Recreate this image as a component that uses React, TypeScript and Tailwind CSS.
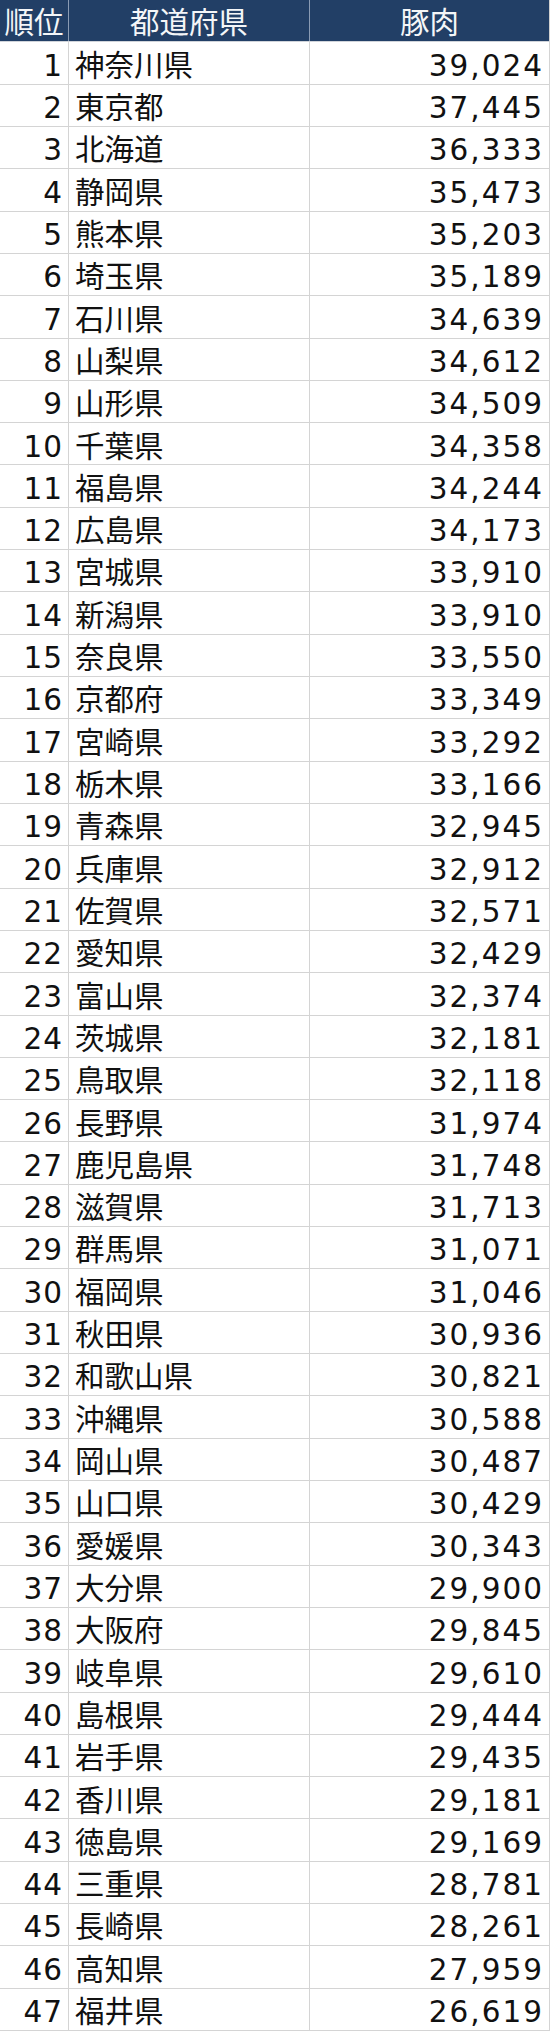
const rows: [string, string][] = [
  ['神奈川県', '39,024'],
  ['東京都', '37,445'],
  ['北海道', '36,333'],
  ['静岡県', '35,473'],
  ['熊本県', '35,203'],
  ['埼玉県', '35,189'],
  ['石川県', '34,639'],
  ['山梨県', '34,612'],
  ['山形県', '34,509'],
  ['千葉県', '34,358'],
  ['福島県', '34,244'],
  ['広島県', '34,173'],
  ['宮城県', '33,910'],
  ['新潟県', '33,910'],
  ['奈良県', '33,550'],
  ['京都府', '33,349'],
  ['宮崎県', '33,292'],
  ['栃木県', '33,166'],
  ['青森県', '32,945'],
  ['兵庫県', '32,912'],
  ['佐賀県', '32,571'],
  ['愛知県', '32,429'],
  ['富山県', '32,374'],
  ['茨城県', '32,181'],
  ['鳥取県', '32,118'],
  ['長野県', '31,974'],
  ['鹿児島県', '31,748'],
  ['滋賀県', '31,713'],
  ['群馬県', '31,071'],
  ['福岡県', '31,046'],
  ['秋田県', '30,936'],
  ['和歌山県', '30,821'],
  ['沖縄県', '30,588'],
  ['岡山県', '30,487'],
  ['山口県', '30,429'],
  ['愛媛県', '30,343'],
  ['大分県', '29,900'],
  ['大阪府', '29,845'],
  ['岐阜県', '29,610'],
  ['島根県', '29,444'],
  ['岩手県', '29,435'],
  ['香川県', '29,181'],
  ['徳島県', '29,169'],
  ['三重県', '28,781'],
  ['長崎県', '28,261'],
  ['高知県', '27,959'],
  ['福井県', '26,619'],
]

export default function App() {
  return (
    <div className="w-[550px] bg-white text-[29.5px] leading-none text-[#111] font-['DejaVu_Sans','Noto_Sans_CJK_JP',sans-serif]">
      {/* header */}
      <div className="grid h-[42.3125px] grid-cols-[69px_241px_1fr] border-b border-[#d0d4da] bg-[#223f66] text-[#f4f6f8]">
        <div className="flex items-center justify-center border-r border-[#8a9bb3] pt-[7px]">順位</div>
        <div className="flex items-center justify-center border-r border-[#8a9bb3] pt-[7px]">都道府県</div>
        <div className="flex items-center justify-center border-r border-[#d0d0d0] pt-[7px]">豚肉</div>
      </div>

      {rows.map(([name, value], i) => (
        <div
          key={name}
          className="grid h-[42.3125px] grid-cols-[69px_241px_1fr] border-b border-[#d4d4d4]"
        >
          <div className="flex items-center justify-end border-r border-[#d4d4d4] pr-[5px] pt-[7px] tracking-[1px]">
            {i + 1}
          </div>
          <div className="flex items-center border-r border-[#d4d4d4] pl-[6px] pt-[7px]">{name}</div>
          <div className="flex items-center justify-end border-r border-[#d4d4d4] pr-[5px] pt-[7px] tracking-[2px]">
            {value}
          </div>
        </div>
      ))}
    </div>
  )
}
